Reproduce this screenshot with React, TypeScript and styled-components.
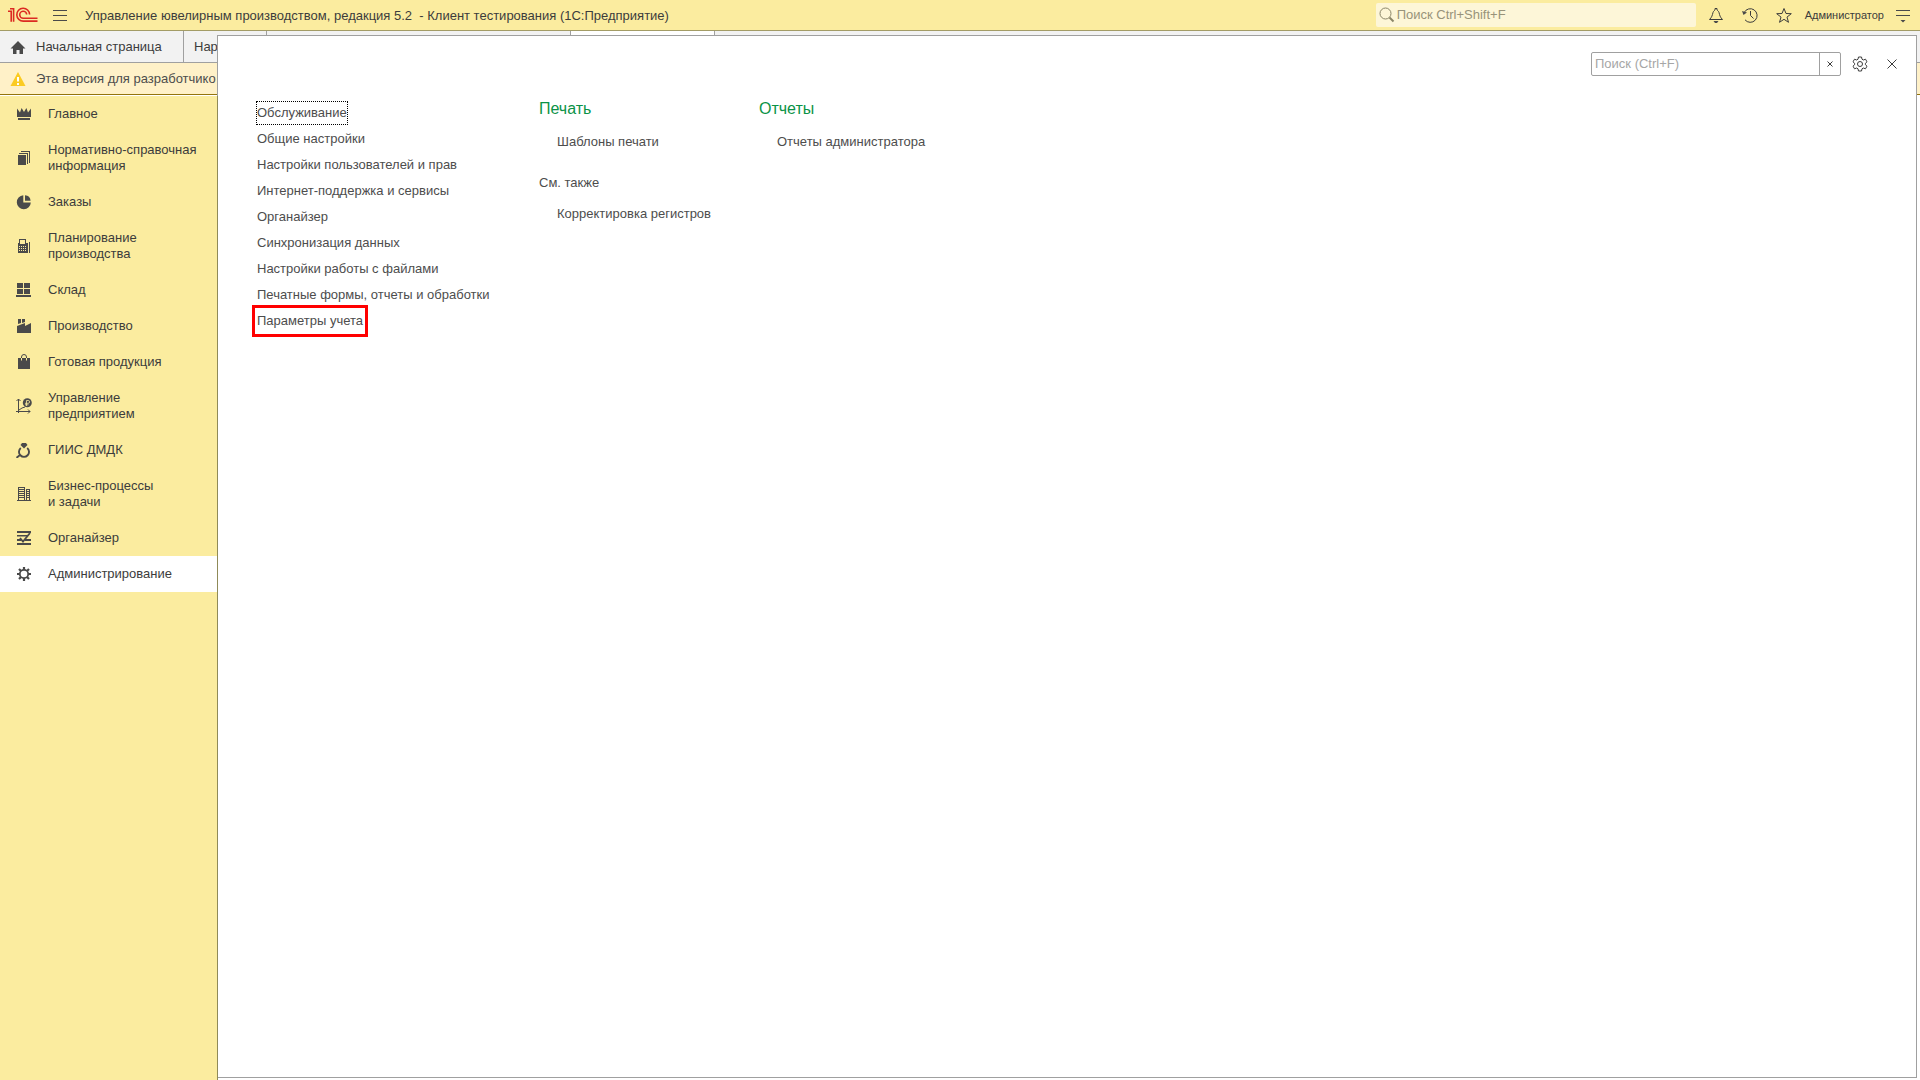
import React from "react";
import styled, { createGlobalStyle } from "styled-components";

const colors = {
  yellow: "#fbec9f",
  searchBg: "#fdf6d8",
  text: "#3c3c3c",
  link: "#4d4d4d",
  icon: "#4a4a4a",
  line: "#a0a0a0",
  olive: "#a39c66",
  green: "#0b9347",
  red: "#ff0000",
};

const GlobalStyle = createGlobalStyle`
  * { box-sizing: border-box; }
  body {
    margin: 0;
    background: #fff;
    color: ${colors.text};
    font: 13px/16px "Liberation Sans", Arial, sans-serif;
  }
  a { color: inherit; text-decoration: none; }
  button, input { font: inherit; color: inherit; }
  svg { display: block; flex: none; }
`;

const Page = styled.div`
  position: relative;
  display: flex;
  flex-direction: column;
  min-height: 100vh;
`;

const TitleBar = styled.header`
  display: flex;
  align-items: center;
  height: 31px;
  padding: 0 2px 0 8px;
  background: ${colors.yellow};
  border-bottom: 1px solid ${colors.olive};
`;

const IconButton = styled.button<{ $size?: number }>`
  display: grid;
  place-items: center;
  width: ${(p) => p.$size ?? 34}px;
  height: 24px;
  padding: 0;
  border: 0;
  background: none;
`;

const AppTitle = styled.h1`
  flex: 1;
  margin: 0 0 0 3px;
  padding-top: 1px;
  font-size: 13px;
  font-weight: 400;
  white-space: pre;
`;

const GlobalSearch = styled.label`
  display: flex;
  align-items: center;
  gap: 2px;
  width: 320px;
  height: 24px;
  margin-right: 3px;
  padding-left: 3px;
  border-radius: 2px;
  background: ${colors.searchBg};
`;

const SearchInput = styled.input`
  flex: 1;
  min-width: 0;
  height: 22px;
  padding: 0 0 1px;
  border: 0;
  outline: 0;
  background: none;
  &::placeholder { color: #98937a; opacity: 1; }
`;

const UserButton = styled.button`
  padding: 0;
  margin: 0 4px;
  border: 0;
  background: none;
  font-size: 11px;
`;

const TabBar = styled.nav`
  display: flex;
  height: 32px;
  background: #f2f2f2;
  border-bottom: 1px solid ${colors.line};
`;

const Tab = styled.a<{ $width: number; $active?: boolean }>`
  display: flex;
  align-items: center;
  gap: 10px;
  width: ${(p) => p.$width}px;
  padding: 0 10px;
  border-right: 1px solid ${colors.line};
  background: ${(p) => (p.$active ? "#fff" : "none")};
`;

const Notice = styled.div`
  display: flex;
  align-items: center;
  gap: 10px;
  height: 32px;
  padding-left: 10px;
  background: #fff1c8;
  border-bottom: 1px solid #94740c;
  color: ${colors.link};
`;

const Workspace = styled.div`
  display: flex;
  flex: 1;
  padding-top: 1px;
`;

const Sidebar = styled.nav`
  position: relative;
  z-index: 2;
  width: 218px;
  background: ${colors.yellow};
  border-right: 1px solid #8f8a58;
`;

const Section = styled.a<{ $active?: boolean }>`
  display: flex;
  align-items: center;
  gap: 16px;
  padding: 10px 0 10px 16px;
  white-space: pre-line;
  background: ${(p) => (p.$active ? "#fff" : "none")};
`;

const MenuPanel = styled.main`
  position: absolute;
  inset: 35px 3px 2px 217px;
  z-index: 1;
  background: #fff;
  border: 1px solid ${colors.line};
`;

const PanelTools = styled.div`
  display: flex;
  justify-content: flex-end;
  align-items: center;
  padding: 16px 8px 0 0;
`;

const PanelSearch = styled.form`
  display: flex;
  width: 250px;
  height: 24px;
  margin-right: 3px;
  border: 1px solid ${colors.line};
  border-radius: 2px;
  input { padding-left: 3px; }
  input::placeholder { color: #a6a6a6; }
`;

const ClearButton = styled.button`
  display: grid;
  place-items: center;
  width: 21px;
  padding: 0;
  border: 0;
  border-left: 1px solid ${colors.line};
  background: none;
`;

const MenuColumns = styled.div`
  display: grid;
  grid-template-columns: 282px 220px 1fr;
  padding: 23px 0 0 39px;
  color: ${colors.link};
`;

const Column = styled.section`
  display: flex;
  flex-direction: column;
  align-items: flex-start;
`;

const MenuList = styled(Column)`
  gap: 4px;
  padding-top: 3px;
`;

const MenuLink = styled.a<{ $focused?: boolean; $marked?: boolean }>`
  padding: 3px 0;
  outline: ${(p) =>
    p.$marked ? `3px solid ${colors.red}` : p.$focused ? "1px dotted #000" : "none"};
  outline-offset: ${(p) => (p.$marked ? "2px" : "0")};
`;

const GroupTitle = styled.h2`
  margin: 0 0 14px;
  font-size: 16px;
  line-height: 20px;
  font-weight: 400;
  color: ${colors.green};
`;

const SeeAlso = styled.h3`
  margin: 24px 0 14px;
  font-size: 13px;
  font-weight: 400;
`;

const GroupLink = styled.a`
  margin-left: 18px;
  padding: 1px 0;
`;

const Icon = ({ children, size = 16 }: { children: React.ReactNode; size?: number }) => (
  <svg width={size} height={size} viewBox={`0 0 ${size} ${size}`} fill={colors.icon} aria-hidden="true">
    {children}
  </svg>
);

const Logo = () => (
  <svg width="30" height="16" viewBox="0 0 30 16" fill="none" stroke="#dc2a22" strokeWidth="1.6" aria-hidden="true">
    <path d="M0 4.200H3.200V14.800M2 1.800H5.600V14.800" />
    <path d="M21.600 7.500A6.400 6.400 0 1 0 15.400 14.100H29.500" />
    <path d="M18.700 7.500A3.500 3.500 0 1 0 15.400 11.300H29.500" />
  </svg>
);

const sections: { label: string; active?: boolean; icon: React.ReactNode }[] = [
  {
    label: "Главное",
    icon: <path d="M1 2.500 4 6.500 5.600 2 8 6 10.400 2 12 6.500 15 2.500V11H1zM2 12h12v2H2z" />,
  },
  {
    label: "Нормативно-справочная\nинформация",
    icon: <path d="M2 5h8v10H2zM3 3h9v11h-1V4H3zM5 1h9v12h-1V2H5z" />,
  },
  {
    label: "Заказы",
    icon: <path d="M7.3 1.3V8.5H14.8A7 7 0 1 1 7.3 1.3ZM9 1.3A6 6 0 0 1 14.6 6.8H9Z" />,
  },
  {
    label: "Планирование\nпроизводства",
    icon: (
      <>
        <path fillRule="evenodd" d="M3 1h7v4h2v10H2V5h1zM4 2v4h5V2zM3 8v1h1V8zM5 8v1h1V8zM7 8v1h1V8zM9 8v1h1V8zM3 10v1h1v-1zM5 10v1h1v-1zM7 10v1h1v-1zM9 10v1h1v-1zM3 12v1h1v-1zM5 12v1h1v-1zM7 12v1h1v-1zM9 12v1h1v-1z" />
        <path d="M13 4h1v11h-1z" />
      </>
    ),
  },
  {
    label: "Склад",
    icon: <path d="M1 1h6v5H1zM8 1h6v5H8zM1 7h6v5H1zM8 7h6v5H8zM0 13h15v2H0z" />,
  },
  {
    label: "Производство",
    icon: <path d="M2 1h3v4L2 6zM6 1h3v3L6 5zM1 8 9 5V8L15 5V15H1z" />,
  },
  {
    label: "Готовая продукция",
    icon: (
      <>
        <path d="M2 4h12v11H2z" />
        <path d="M5.5 4V3a2.5 2.5 0 0 1 5 0v1" fill="none" stroke={colors.icon} />
        <path d="M5.5 4v2.5M10.5 4v2.5" stroke={colors.yellow} />
      </>
    ),
  },
  {
    label: "Управление\nпредприятием",
    icon: (
      <>
        <path d="M2.5 15V1M.5 3l2-2 2 2M0 13.5h14M12 11.5l2 2-2 2M3 12l3-2 3-1" fill="none" stroke={colors.icon} />
        <circle cx="11.3" cy="4.7" r="4.5" />
        <path d="M10.5 8V2.5h1.7a1.4 1.4 0 0 1 0 2.8H9M9 6.8h3.5" fill="none" stroke={colors.yellow} strokeWidth=".8" />
      </>
    ),
  },
  {
    label: "ГИИС ДМДК",
    icon: (
      <>
        <path d="M4.8 6A5 5 0 1 0 11.2 6M4 13 .5 15.8" fill="none" stroke={colors.icon} strokeWidth="1.9" />
        <path d="M6 1h4l1.5 2L8 6.5 4.5 3z" />
      </>
    ),
  },
  {
    label: "Бизнес-процессы\nи задачи",
    icon: (
      <path d="M1 14h14v1H1zM2 1h1v13H2zM8 1h1v13H8zM10 3h1v11h-1zM13 3h1v11h-1zM2 1h7v1H2zM2 3h7v1H2zM2 5h7v1H2zM2 7h7v1H2zM2 9h7v1H2zM2 11h7v1H2zM10 3h4v1h-4zM10 5h4v1h-4zM10 7h4v1h-4zM10 9h4v1h-4zM10 11h4v1h-4z" />
    ),
  },
  {
    label: "Органайзер",
    icon: (
      <>
        <path d="M1 1h14v2H1zM1 5h11v1.500H1zM1 9h4v2H1zM9 9h6v2H9zM1 13h14v2H1z" />
        <path d="M4 8 7 11.500 14 3" fill="none" stroke={colors.icon} strokeWidth="1.800" />
      </>
    ),
  },
  {
    label: "Администрирование",
    active: true,
    icon: (
      <>
        <circle cx="8" cy="8" r="4.2" fill="none" stroke={colors.icon} strokeWidth="1.8" />
        <path
          d="M8 1v3M8 12v3M1 8h3M12 8h3M3 3l2 2M11 11l2 2M3 13l2-2M11 5l2-2"
          stroke={colors.icon}
          strokeWidth="2.2"
        />
      </>
    ),
  },
];

const serviceLinks: { label: string; focused?: boolean; marked?: boolean }[] = [
  { label: "Обслуживание", focused: true },
  { label: "Общие настройки" },
  { label: "Настройки пользователей и прав" },
  { label: "Интернет-поддержка и сервисы" },
  { label: "Органайзер" },
  { label: "Синхронизация данных" },
  { label: "Настройки работы с файлами" },
  { label: "Печатные формы, отчеты и обработки" },
  { label: "Параметры учета", marked: true },
];

export default function App() {
  return (
    <Page>
      <GlobalStyle />
      <TitleBar>
        <Logo />
        <IconButton $size={44} aria-label="Меню">
          <Icon>
            <path d="M1 3h14v1H1zM1 8h14v1H1zM1 13h14v1H1z" />
          </Icon>
        </IconButton>
        <AppTitle>{"Управление ювелирным производством, редакция 5.2  - Клиент тестирования (1С:Предприятие)"}</AppTitle>
        <GlobalSearch>
          <Icon>
            <circle cx="6.500" cy="6.500" r="5.500" fill="none" stroke="#8a8568" />
            <path d="m10.500 10.500 4 4" stroke="#8a8568" strokeWidth="2" />
          </Icon>
          <SearchInput placeholder="Поиск Ctrl+Shift+F" aria-label="Глобальный поиск" />
        </GlobalSearch>
        <IconButton aria-label="Уведомления">
          <Icon>
            <path
              d="M1.500 12.500h13C12 10 11.800 8.500 11 5.500 10.500 4 9.500 3.500 9 3V1.500H7V3C6.500 3.500 5.500 4 5 5.500 4.200 8.500 4 10 1.500 12.500z"
              fill="none"
              stroke={colors.text}
            />
            <path d="M5.500 14h5l-1.500 2H7z" />
          </Icon>
        </IconButton>
        <IconButton aria-label="История">
          <Icon>
            <path d="M2.200 5.500A6.800 6.800 0 1 1 3 12.800M8.500 4v4.500l3 3" fill="none" stroke={colors.text} />
            <path d="M0 4 5 5.500 1.500 8z" />
          </Icon>
        </IconButton>
        <IconButton aria-label="Избранное">
          <Icon>
            <path
              d="m8 1.500 2 5 5.300.2-4.300 3.400 1.500 5.200L8 12.300l-4.500 3 1.500-5.200L.7 6.700 6 6.500z"
              fill="none"
              stroke={colors.text}
            />
          </Icon>
        </IconButton>
        <UserButton>Администратор</UserButton>
        <IconButton $size={30} aria-label="Сервис и настройки">
          <Icon>
            <path d="M1 3h14v1H1zM1 8h14v1H1zM5.500 13h5L8 15.500z" />
          </Icon>
        </IconButton>
      </TitleBar>

      <TabBar>
        <Tab href="#home" $width={184}>
          <Icon>
            <path d="M8 2 .5 9.500H3V15h3.500v-4h3v4H13V9.500h2.500z" />
          </Icon>
          Начальная страница
        </Tab>
        <Tab href="#orders" $width={83}>Нар</Tab>
        <Tab href="#tab3" $width={304} />
        <Tab href="#tab4" $width={144} $active />
      </TabBar>

      <Notice>
        <Icon>
          <path d="M8 1 15.500 15H.5z" fill="#fbcb22" />
          <path d="M7 6h2v4.500H7zM7 12h2v2H7z" fill="#fff" />
        </Icon>
        Эта версия для разработчико
      </Notice>

      <Workspace>
        <Sidebar>
          {sections.map((s) => (
            <Section key={s.label} href="#section" $active={s.active}>
              <Icon>{s.icon}</Icon>
              {s.label}
            </Section>
          ))}
        </Sidebar>
      </Workspace>

      <MenuPanel>
        <PanelTools>
          <PanelSearch>
            <SearchInput placeholder="Поиск (Ctrl+F)" aria-label="Поиск" />
            <ClearButton type="button" aria-label="Очистить">
              <Icon size={6}>
                <path d="m.5.5 5 5m0-5-5 5" stroke={colors.text} />
              </Icon>
            </ClearButton>
          </PanelSearch>
          <IconButton $size={32} aria-label="Настройка">
            <Icon>
              <path
                d="M6.500 1h3l.5 2.200 1.300.8 2.200-.8 1.500 2.600L13.400 7.300v1.400l1.600 1.500-1.500 2.600-2.200-.8-1.300.8-.5 2.200h-3L6 12.800 4.700 12l-2.200.8L1 10.200l1.600-1.500V7.300L1 5.800l1.500-2.600 2.200.8L6 3.200z"
                fill="none"
                stroke={colors.text}
              />
              <circle cx="8" cy="8" r="2.500" fill="none" stroke={colors.text} />
            </Icon>
          </IconButton>
          <IconButton $size={32} aria-label="Закрыть">
            <Icon size={10}>
              <path d="m.5.5 9 9m0-9-9 9" stroke={colors.text} />
            </Icon>
          </IconButton>
        </PanelTools>

        <MenuColumns>
          <MenuList>
            {serviceLinks.map((l) => (
              <MenuLink key={l.label} href="#item" $focused={l.focused} $marked={l.marked}>
                {l.label}
              </MenuLink>
            ))}
          </MenuList>
          <Column>
            <GroupTitle>Печать</GroupTitle>
            <GroupLink href="#templates">Шаблоны печати</GroupLink>
            <SeeAlso>См. также</SeeAlso>
            <GroupLink href="#registers">Корректировка регистров</GroupLink>
          </Column>
          <Column>
            <GroupTitle>Отчеты</GroupTitle>
            <GroupLink href="#reports">Отчеты администратора</GroupLink>
          </Column>
        </MenuColumns>
      </MenuPanel>
    </Page>
  );
}
